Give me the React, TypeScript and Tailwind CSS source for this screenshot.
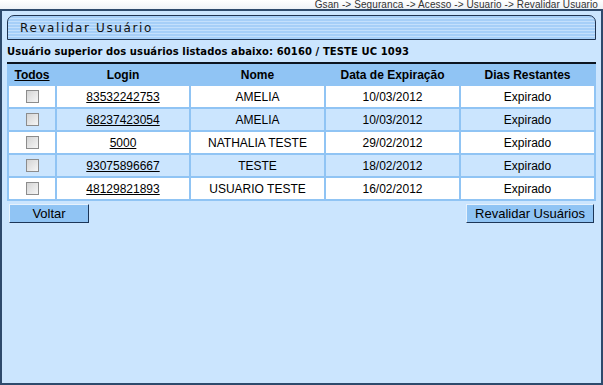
const rows = [
  { login: "83532242753", nome: "AMELIA", data: "10/03/2012", dias: "Expirado" },
  { login: "68237423054", nome: "AMELIA", data: "10/03/2012", dias: "Expirado" },
  { login: "5000", nome: "NATHALIA TESTE", data: "29/02/2012", dias: "Expirado" },
  { login: "93075896667", nome: "TESTE", data: "18/02/2012", dias: "Expirado" },
  { login: "48129821893", nome: "USUARIO TESTE", data: "16/02/2012", dias: "Expirado" },
];

function Check() {
  return (
    <div className="mx-auto h-[13px] w-[13px] border border-[#8c8c8c] bg-[linear-gradient(135deg,#d4d4d4,#f6f6f6)]" />
  );
}

export default function App() {
  return (
    <div className="h-[385px] w-[603px] overflow-hidden bg-white font-['Liberation_Sans',Arial,sans-serif]">
      <div className="flex h-[9px] items-center justify-end bg-[linear-gradient(to_bottom,#ffffff,#eef2f6)] pr-[5px] text-[10px] leading-[9px] tracking-[0.1px] text-[#333]">
        Gsan -&gt; Seguranca -&gt; Acesso -&gt; Usuario -&gt; Revalidar Usuario
      </div>
      <div className="flex h-[376px] flex-col border-2 border-[#2e4a6c] bg-[#cbe5fe] px-[5px]">
        <div className="mt-[4px] flex h-[25px] items-center rounded-tl-[7px] rounded-tr-[7px] border border-[#1f3350] bg-[repeating-linear-gradient(to_bottom,#a6cff8_0px,#a6cff8_2px,#c4e0fc_2px,#c4e0fc_3px)] pl-[12px] font-['DejaVu_Sans',Verdana,sans-serif] text-[12px] tracking-[1.6px] text-[#111]">
          Revalidar Usuário
        </div>
        <div className="mt-[5px] font-['DejaVu_Sans',Verdana,sans-serif] text-[10px] leading-[14px] font-bold tracking-[0.1px] text-black">
          Usuário superior dos usuários listados abaixo: 60160 / TESTE UC 1093
        </div>
        <div className="mt-[3px] h-[2px] bg-[#0b1420]" />
        <table className="w-full border-separate border-spacing-[2px] bg-[#90c4f4] text-[12px] text-black">
          <thead>
            <tr className="h-[18px] font-bold">
              <th className="w-[46px] underline">Todos</th>
              <th className="w-[132px]">Login</th>
              <th className="w-[133px]">Nome</th>
              <th className="w-[133px]">Data de Expiração</th>
              <th>Dias Restantes</th>
            </tr>
          </thead>
          <tbody>
            {rows.map((r, i) => (
              <tr key={r.login} className={"h-[21px] text-center " + (i % 2 === 0 ? "bg-white" : "bg-[#cbe5fe]")}>
                <td>
                  <Check />
                </td>
                <td className="underline">{r.login}</td>
                <td>{r.nome}</td>
                <td>{r.data}</td>
                <td>{r.dias}</td>
              </tr>
            ))}
          </tbody>
        </table>
        <div className="mt-[3px] flex justify-between px-[2px]">
          <button className="h-[19px] w-[80px] border border-[#e6f1fc] border-r-[#1c3658] border-b-[#1c3658] bg-[#90c4f4] text-[13px] leading-[16px] text-black">
            Voltar
          </button>
          <button className="h-[19px] w-[128px] border border-[#e6f1fc] border-r-[#1c3658] border-b-[#1c3658] bg-[#90c4f4] text-[13px] leading-[16px] text-black">
            Revalidar Usuários
          </button>
        </div>
      </div>
    </div>
  );
}
